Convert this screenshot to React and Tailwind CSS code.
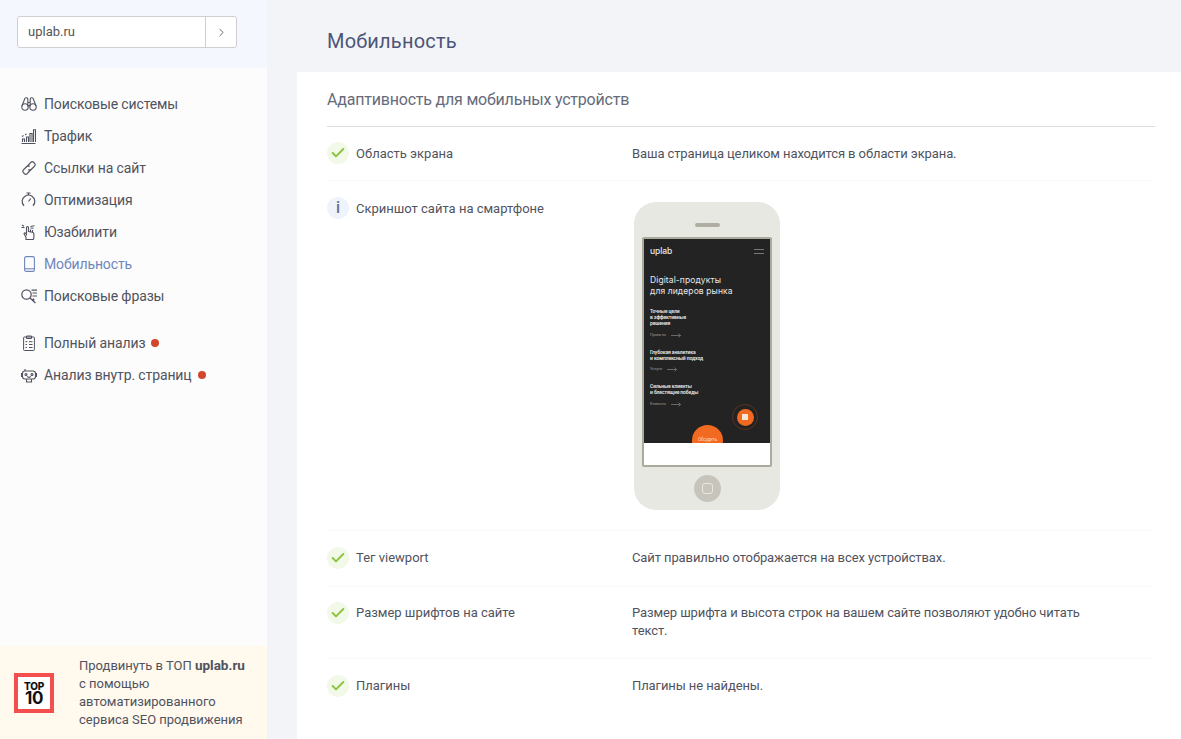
import React from 'react';
import { ChevronRight, Check } from 'lucide-react';

const font = "font-['Roboto','Liberation_Sans',sans-serif]";

const IconBinoculars = () => (
  <svg width="16" height="14" viewBox="0 0 16 14" fill="none" stroke="currentColor" strokeWidth="1.1">
    <circle cx="4" cy="10" r="3.2" />
    <circle cx="12" cy="10" r="3.2" />
    <path d="M1 9 3.600 2.200A1.500 1.500 0 0 1 6.800 2.600V9.500M15 9 12.400 2.200A1.500 1.500 0 0 0 9.200 2.600V9.500M6.800 5.500h2.400M6.800 8.500h2.400" />
  </svg>
);

const IconBars = () => (
  <svg width="15" height="15" viewBox="0 0 15 15" fill="none" stroke="currentColor" strokeWidth="1.1">
    <path d="M.5 14.500h14M1.500 13v-3h2v3M5.500 13V8h2v5M9 13V4.500h2V13M12.500 13V.8h2V13" />
    <path d="M1 7.500 2.500 6.500M4 5.800 5.500 5" />
  </svg>
);

const IconLink = () => (
  <svg width="16" height="16" viewBox="0 0 16 16" fill="none" stroke="currentColor" strokeWidth="1.2">
    <path d="M6.500 6 9.800 2.400a2 2 0 0 1 2.800-.1l1 1a2 2 0 0 1 0 2.800L10.200 9.500a2 2 0 0 1-2.800 0" />
    <path d="M9.500 10 6.200 13.600a2 2 0 0 1-2.800.1l-1-1a2 2 0 0 1 0-2.800L5.800 6.500a2 2 0 0 1 2.800 0" />
  </svg>
);

const IconStopwatch = () => (
  <svg width="15" height="16" viewBox="0 0 15 16" fill="none" stroke="currentColor" strokeWidth="1.2">
    <path d="M4 4.200A6.200 6.200 0 0 0 3 13.800M11 4.200A6.200 6.200 0 0 1 12 13.800M4 4.200A6.200 6.200 0 0 1 11 4.200" />
    <path d="M5.500 1h4M7.500 1v2.300M7.500 9.500 9.800 6.500" />
  </svg>
);

const IconHand = () => (
  <svg width="15" height="16" viewBox="0 0 15 16" fill="none" stroke="currentColor" strokeWidth="1.1">
    <path d="M5 15.500V13.500L3.200 10c-.5-1 .7-1.700 1.400-.8L5.500 10.500V3.500a1 1 0 0 1 2 0V7.500l4 .8c.9.200 1.400.9 1.400 1.700V13.500l-.6 2z" />
    <path d="M7.500 7.500V5.500M9.500 8V5.500M11.500 8.300V6M.5 3.500h3M1 1l2 1.200M9.500 2.500l4-.8M9.500 4l3 .2" />
  </svg>
);

const IconPhone = () => (
  <svg width="11" height="16" viewBox="0 0 11 16" fill="none" stroke="currentColor" strokeWidth="1.1">
    <rect x=".6" y=".6" width="9.800" height="14.800" rx="1.500" />
    <path d="M.6 12.800h9.800" />
  </svg>
);

const IconSearchList = () => (
  <svg width="16" height="15" viewBox="0 0 16 15" fill="none" stroke="currentColor" strokeWidth="1.2">
    <circle cx="5.500" cy="5.500" r="4.700" />
    <path d="M9 9 14.500 14M10.500 1.200H16M11.500 4H16M11.500 7H16" />
    <path d="M11.500 11.500 13 10" strokeWidth="2.200" />
  </svg>
);

const IconClipboard = () => (
  <svg width="12" height="16" viewBox="0 0 12 16" fill="none" stroke="currentColor" strokeWidth="1">
    <rect x=".6" y="2" width="10.800" height="13.500" rx=".8" />
    <path d="M3.500 3.500V1h5v2.500zM2.500 6.500l.7.700 1-1.200M6 6.700h3.500M2.500 9.500h1.500M6 9.500h3.500M2.500 12.500h1.500M6 12.500h3.500" />
  </svg>
);

const IconRobot = () => (
  <svg width="16" height="15" viewBox="0 0 16 15" fill="none" stroke="currentColor" strokeWidth="1.1">
    <rect x="1.500" y="3" width="13" height="8" rx="2.500" />
    <path d="M1.500 5.500H.5v3h1M14.500 5.500h1v3h-1M4 3V1M5.500 11v3h5v-3M6 8.500l2 1 2-1" />
    <circle cx="5" cy="6.500" r="1" />
    <circle cx="11" cy="6.500" r="1" />
  </svg>
);

const navTop = [
  { icon: <IconBinoculars />, label: 'Поисковые системы' },
  { icon: <IconBars />, label: 'Трафик' },
  { icon: <IconLink />, label: 'Ссылки на сайт' },
  { icon: <IconStopwatch />, label: 'Оптимизация' },
  { icon: <IconHand />, label: 'Юзабилити' },
  { icon: <IconPhone />, label: 'Мобильность', active: true, indent: 'pl-[3px]' },
  { icon: <IconSearchList />, label: 'Поисковые фразы' },
];

const navBottom = [
  { icon: <IconClipboard />, label: 'Полный анализ', dot: true, indent: 'pl-[2px]' },
  { icon: <IconRobot />, label: 'Анализ внутр. страниц', dot: true },
];

const NavItem = ({ item }) => (
  <a className={`flex items-center h-8 pl-[21px] text-sm tracking-[-0.12px] ${item.active ? 'text-[#6f86b9]' : 'text-[#50535e]'}`}>
    <span className={`w-[23px] flex items-center shrink-0 ${item.indent || ''}`}>{item.icon}</span>
    <span>{item.label}</span>
    {item.dot && <span className="ml-[6px] w-2 h-2 rounded-full bg-[#d2472a]" />}
  </a>
);

const StatusIcon = ({ type }) => (
  <span
    className={`w-[22px] h-[22px] rounded-full flex items-center justify-center shrink-0 ${
      type === 'info' ? 'bg-[#eff4fc] text-[#5d7390]' : 'bg-[#f2f9e8] text-[#8bc540]'
    }`}
  >
    {type === 'info' ? (
      <span className="font-medium text-base leading-none">i</span>
    ) : (
      <Check size={16} strokeWidth={3} />
    )}
  </span>
);

const ScreenArrow = () => (
  <svg width="10" height="5" viewBox="0 0 10 5" fill="none" stroke="#999" strokeWidth=".6">
    <path d="M0 2.500h9.500M7.500 .6l2 1.900-2 1.900" />
  </svg>
);

const ScreenLink = ({ label, className }) => (
  <div className={`flex items-center gap-[5px] text-[4px] leading-[6px] text-[#999] ${className}`}>
    <span>{label}</span>
    <ScreenArrow />
  </div>
);

const PhoneScreen = () => (
  <div className="relative h-[204px] bg-[#232323] overflow-hidden text-[#e8e8e8] px-[6px]">
    <div className="flex items-center justify-between pt-[7px] h-[18px]">
      <span className="text-[8.500px] font-medium leading-none font-['Inter',sans-serif]">uplab</span>
      <span className="w-[10px] h-[5px] border-y border-[#777]" />
    </div>
    <div className="mt-[18px] text-[8.500px] leading-[11px] tracking-[0.1px] font-['Inter',sans-serif]">
      Digital-продукты
      <br />
      для лидеров рынка
    </div>
    <div className="mt-[11px] text-[5px] leading-[6px] font-semibold">
      Точные цели
      <br />в эффективные
      <br />решения
    </div>
    <ScreenLink label="Проекты" className="mt-[6px]" />
    <div className="mt-[11px] text-[5px] leading-[6px] font-semibold">
      Глубокая аналитика
      <br />и комплексный подход
    </div>
    <ScreenLink label="Услуги" className="mt-[5px]" />
    <div className="mt-[11px] text-[5px] leading-[6px] font-semibold">
      Сильные клиенты
      <br />и блестящие победы
    </div>
    <ScreenLink label="Клиенты" className="mt-[6px]" />
    {/* orange buttons over the dark screen */}
    <div className="absolute left-[88px] top-[165px] w-[26px] h-[26px] rounded-full border border-[#5a3322] flex items-center justify-center">
      <div className="w-[17px] h-[17px] rounded-full bg-[#f26a21] flex items-center justify-center">
        <div className="w-[6px] h-[6px] bg-[#f6e4d6]" />
      </div>
    </div>
    <div className="absolute left-[48px] top-[186px] w-[31px] h-[31px] rounded-full bg-[#f26a21] text-center text-[4.500px] leading-[6px] pt-[12px] text-[#ffd9c0]">
      Обсудить
    </div>
  </div>
);

const Phone = () => (
  <div className="w-[146px] h-[308px] ml-[2px] mt-[2px] rounded-[22px] bg-[#e8e8e2] px-2 pt-[21px]">
    <div className="mx-auto w-[25px] h-1 rounded-full bg-[#b0aea3]" />
    <div className="mt-[10px] h-[230px] rounded-[2px] border-2 border-[#aca99d] bg-white overflow-hidden">
      <PhoneScreen />
    </div>
    <div className="mt-2 mx-auto w-[27px] h-[27px] rounded-full bg-[#c7c5bb] flex items-center justify-center">
      <div className="w-[11px] h-[11px] rounded-[3px] border border-[#e8e8e2]" />
    </div>
  </div>
);

const Row = ({ type = 'ok', label, className = '', labelClass = '', textClass = 'pt-[2px]', children }) => (
  <div className={`flex text-[13px] text-[#50535e] ${className}`}>
    <div className="w-[305px] flex items-center gap-[7px] h-[22px] shrink-0">
      <StatusIcon type={type} />
      <span className={labelClass}>{label}</span>
    </div>
    <div className={`leading-[18px] tracking-[-0.1px] w-[460px] ${textClass}`}>{children}</div>
  </div>
);

export default function App() {
  return (
    <div className={`flex h-[739px] overflow-hidden bg-[#f3f4f8] ${font}`}>
      <aside className="w-[267px] shrink-0 flex flex-col bg-[#fcfcfd]">
        <div className="h-[68px] bg-[#f4f7fd] px-[17px] pt-[16px]">
          <div className="flex w-[220px] h-8 rounded-[3px] border border-[#cfcfcf] bg-white text-[13px] text-[#555]">
            <span className="flex-1 flex items-center pl-[10px]">uplab.ru</span>
            <span className="w-[31px] flex items-center justify-center border-l border-[#cfcfcf]">
              <ChevronRight size={13} strokeWidth={1.6} />
            </span>
          </div>
        </div>
        <nav className="pt-5">
          {navTop.map((item) => (
            <NavItem key={item.label} item={item} />
          ))}
        </nav>
        <nav className="pt-[15px]">
          {navBottom.map((item) => (
            <NavItem key={item.label} item={item} />
          ))}
        </nav>
        <div className="mt-auto h-[93px] bg-[#fff9ee] flex items-center pl-[14px]">
          <div className="w-10 h-10 mt-[1px] border-[4px] border-[#f44f4f] bg-white flex flex-col items-center justify-center shrink-0 text-[#111] font-['Inter',sans-serif] font-extrabold">
            <span className="text-[10px] leading-[10px] tracking-[-0.3px]">TOP</span>
            <span className="text-[17px] leading-[14px] font-bold tracking-[-0.5px]">10</span>
          </div>
          <p className="ml-[25px] text-[13px] leading-[18px] text-[#50535e]">
            Продвинуть в ТОП <b className="font-bold text-[13.500px]">uplab.ru</b>
            <br />с помощью
            <br />
            автоматизированного
            <br />
            сервиса SEO продвижения
          </p>
        </div>
      </aside>

      <main className="flex-1 min-w-0 flex flex-col">
        <div className="h-[72px] flex items-center pl-[60px] pt-[10px] text-xl tracking-[0.2px] text-[#4d5577]">Мобильность</div>
        <div className="flex-1 ml-[30px] bg-white pl-[30px] pr-[26px]">
          <h2 className="h-[55px] pt-[17px] border-b border-[#dcdde3] text-base leading-[22px] tracking-[-0.2px] text-[#666b7c]">
            Адаптивность для мобильных устройств
          </h2>
          <Row label="Область экрана" labelClass="pt-[1px]" textClass="pt-[3px]" className="pt-[15px] pb-4 border-b border-[#fafafa]">
            Ваша страница целиком находится в области экрана.
          </Row>
          <Row type="info" label="Скриншот сайта на смартфоне" labelClass="pt-[1px]" textClass="pt-[3px]" className="pt-4 pb-5 border-b border-[#fafafa]">
            <Phone />
          </Row>
          <Row label="Тег viewport" className="pt-4 pb-[17px] border-b border-[#fafafa]">
            Сайт правильно отображается на всех устройствах.
          </Row>
          <Row label="Размер шрифтов на сайте" className="pt-[15px] pb-[18px] border-b border-[#fafafa]">
            Размер шрифта и высота строк на вашем сайте позволяют удобно читать текст.
          </Row>
          <Row label="Плагины" className="pt-4">
            Плагины не найдены.
          </Row>
        </div>
      </main>
    </div>
  );
}
